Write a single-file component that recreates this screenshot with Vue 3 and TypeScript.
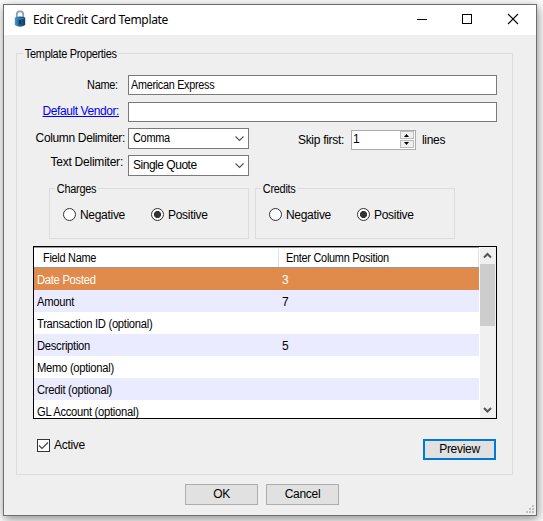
<script setup lang="ts">
import { ref } from 'vue'

interface Field {
  name: string
  position: string
}

interface SignGroup {
  title: string
  value: 'Negative' | 'Positive'
}

const templateName = ref('American Express')
const vendor = ref('')
const skip = ref('1')
const active = ref(true)
const selected = ref(0)
const options = ['Negative', 'Positive'] as const

const signs = ref<SignGroup[]>([
  { title: 'Charges', value: 'Positive' },
  { title: 'Credits', value: 'Positive' },
])

const fields: Field[] = [
  { name: 'Date Posted', position: '3' },
  { name: 'Amount', position: '7' },
  { name: 'Transaction ID (optional)', position: '' },
  { name: 'Description', position: '5' },
  { name: 'Memo (optional)', position: '' },
  { name: 'Credit (optional)', position: '' },
  { name: 'GL Account (optional)', position: '' },
]
</script>

<template>
  <div class="desktop">
    <main class="window">
      <header class="titlebar">
        <svg class="lock" width="12" height="18" viewBox="0 0 12 18">
          <defs>
            <linearGradient id="body" x1="0" x2="1" y1="0" y2="0">
              <stop offset="0" stop-color="#4d9ac9" />
              <stop offset=".4" stop-color="#1e6799" />
              <stop offset="1" stop-color="#133c62" />
            </linearGradient>
          </defs>
          <path d="M2.800 8V4.500C2.800 .3 9.200 .3 9.200 4.500V8" fill="none" stroke="#86a2b5" stroke-width="1.800" />
          <path d="M.8 7.500Q6 5.500 11.200 7.500V15Q6 18.500 .8 15Z" fill="url(#body)" />
          <path d="M1.500 8Q6 10 10.500 8" fill="none" stroke="#5795bb" stroke-width=".8" />
          <path d="M6 10v4" stroke="#0c2f50" stroke-width="1.500" />
        </svg>
        <h1 class="title">Edit Credit Card Template</h1>
        <svg class="controls" width="103" height="12" viewBox="0 0 103 12" fill="none" stroke="#000">
          <path d="M1 6.500h10" />
          <rect x="46.500" y="1.500" width="9" height="9" />
          <path d="M92 1l10 10M102 1l-10 10" stroke-width="1.100" />
        </svg>
      </header>

      <section class="group properties">
        <span class="legend main-legend">Template Properties</span>

        <div class="row">
          <label class="label name-label"><span class="narrow end">Name:</span></label>
          <div class="input"><span class="narrow">{{ templateName }}</span></div>
        </div>
        <div class="row">
          <a class="label link">Default Vendor:</a>
          <div class="input"><span class="narrow">{{ vendor }}</span></div>
        </div>
        <div class="row">
          <label class="label column-label">Column Delimiter:</label>
          <div class="combo">
            <span class="narrow">Comma</span>
            <svg width="9" height="6" viewBox="0 0 9 6"><path d="M.5.5l4 4 4-4" /></svg>
          </div>
          <label class="skip">Skip first:</label>
          <div class="spinner">
            <span class="number">{{ skip }}</span>
            <div class="steps">
              <svg width="14" height="8" viewBox="0 0 14 8"><path d="M4 6h5L6.500 3z" /></svg>
              <svg width="14" height="8" viewBox="0 0 14 8"><path d="M4 2h5L6.500 5z" /></svg>
            </div>
          </div>
          <span class="lines">lines</span>
        </div>
        <div class="row">
          <label class="label text-label">Text Delimiter:</label>
          <div class="combo quote">
            <span>Single Quote</span>
            <svg width="9" height="6" viewBox="0 0 9 6"><path d="M.5.5l4 4 4-4" /></svg>
          </div>
        </div>

        <div class="signs">
          <div v-for="sign in signs" :key="sign.title" class="group sign">
            <span class="legend">{{ sign.title }}</span>
            <div
              v-for="option in options"
              :key="option"
              class="radio"
              @click="sign.value = option"
            >
              <i class="dot" :class="{ on: sign.value === option }"></i>
              <span>{{ option }}</span>
            </div>
          </div>
        </div>

        <div class="table">
          <div class="grid">
            <div class="head">
              <div class="cell first"><span class="narrow">Field Name</span></div>
              <div class="cell"><span class="narrow">Enter Column Position</span></div>
            </div>
            <div
              v-for="(field, index) in fields"
              :key="field.name"
              class="line"
              :class="{ odd: index % 2 === 1, selected: index === selected }"
              @click="selected = index"
            >
              <div class="field"><span class="narrow">{{ field.name }}</span></div>
              <span>{{ field.position }}</span>
            </div>
          </div>
          <div class="scrollbar">
            <svg width="15" height="17" viewBox="0 0 15 17"><path d="M4 10.500l3.500-3.500 3.500 3.500" /></svg>
            <div class="thumb"></div>
            <svg class="down" width="15" height="17" viewBox="0 0 15 17"><path d="M4 7l3.500 3.500L11 7" /></svg>
          </div>
        </div>

        <div class="footer">
          <div class="check" @click="active = !active">
            <svg width="13" height="13" viewBox="0 0 13 13">
              <rect x=".5" y=".5" width="12" height="12" fill="#fff" stroke="#333" />
              <path v-if="active" d="M2 6.500l3 3 6-6" fill="none" stroke="#444" stroke-width="1.200" />
            </svg>
            <span>Active</span>
          </div>
          <button class="button preview">Preview</button>
        </div>
      </section>

      <div class="actions">
        <button class="button">OK</button>
        <button class="button">Cancel</button>
      </div>
      <svg class="grip" width="8" height="8" viewBox="0 0 8 8" fill="#bfbfbf">
        <path d="M6 0h2v2H6zM3 3h2v2H3zM6 3h2v2H6zM0 6h2v2H0zM3 6h2v2H3zM6 6h2v2H6z" />
      </svg>
    </main>
  </div>
</template>

<style>
body {
  background: #f8f8f8;
}
</style>

<style scoped>
* {
  box-sizing: border-box;
}
.desktop {
  width: 543px;
  height: 521px;
  padding: 4px 6px 5px 3px;
  overflow: hidden;
  background: #fcfcfc;
  font: 12px/14px "Liberation Sans", Arial, sans-serif;
  letter-spacing: -0.3px;
  color: #000;
  white-space: nowrap;
}
.narrow {
  display: inline-block;
  transform: scaleX(0.91);
  transform-origin: left;
}
.narrow.end {
  transform-origin: right;
}
.window {
  position: relative;
  height: 512px;
  border: 1px solid #6e6e6e;
  background: #efefef;
  box-shadow: 1px 3px 10px rgba(0, 0, 0, 0.45);
}
.titlebar {
  display: flex;
  height: 30px;
  background: #fff;
}
.lock {
  margin: 5px 0 0 10px;
}
.title {
  margin: 7px 0 0 7px;
  font: 12px/16px "Noto Sans", sans-serif;
  letter-spacing: -0.33px;
}
.controls {
  margin: 8px 17px 0 auto;
}
.group {
  position: relative;
  border: 1px solid #dcdcdc;
}
.legend {
  position: absolute;
  top: -7px;
  left: 5px;
  padding: 0 2px;
  background: #efefef;
  transform: scaleX(0.91);
  transform-origin: left;
}
.main-legend {
  left: 6px;
}
.properties {
  width: 497px;
  height: 422px;
  margin: 18px 0 0 12px;
  padding-top: 21px;
}
.row {
  display: flex;
  height: 20px;
  margin-bottom: 7px;
}
.row:nth-of-type(n + 2) {
  margin-bottom: 6px;
}
.row:nth-of-type(n + 3) {
  height: 21px;
}
.label {
  width: 111px;
  padding: 3px 10px 0 0;
  text-align: right;
}
.link {
  padding: 2px 9px 0 0;
  color: #00f;
  text-decoration: underline;
  letter-spacing: -0.42px;
}
.column-label {
  padding: 3px 3px 0 0;
  letter-spacing: -0.35px;
}
.text-label {
  padding: 0 5px 0 0;
  letter-spacing: -0.23px;
}
.input {
  width: 369px;
  padding: 2px;
  border: 1px solid #7a7a7a;
  background: #fff;
}
.input .narrow {
  transform: scaleX(0.9);
}
.combo {
  display: flex;
  justify-content: space-between;
  width: 121px;
  padding: 2px 4px;
  border: 1px solid #7a7a7a;
  background: #fff;
}
.quote {
  letter-spacing: -0.48px;
}
.combo svg {
  margin-top: 5px;
  fill: none;
  stroke: #555;
  stroke-width: 1.1;
}
.skip {
  width: 102px;
  padding: 5px 7px 0 0;
  text-align: right;
}
.spinner {
  display: flex;
  justify-content: space-between;
  height: 20px;
  margin-top: 2px;
  width: 65px;
  border: 1px solid #ababab;
  background: #fff;
}
.number {
  padding: 1px;
}
.steps {
  display: flex;
  flex-direction: column;
  gap: 1px;
  padding-right: 1px;
}
.steps svg {
  outline: 1px solid #bbb;
  outline-offset: -1px;
  background: #f0f0f0;
}
.lines {
  padding: 5px 0 0 6px;
}
.signs {
  display: flex;
  gap: 6px;
  margin: 12px 0 7px 32px;
}
.sign {
  display: flex;
  width: 200px;
  height: 51px;
  padding: 19px 0 0 13px;
}
.radio {
  display: flex;
  gap: 4px;
  width: 88px;
}
.dot {
  width: 13px;
  height: 13px;
  border: 1px solid #333;
  border-radius: 50%;
  background: #fff;
}
.dot.on {
  background: radial-gradient(circle, #333 3.2px, #fff 3.9px);
}
.table {
  display: flex;
  width: 464px;
  height: 173px;
  margin-left: 16px;
  border: 1px solid #000;
  overflow: hidden;
  background: #fff;
}
.grid {
  width: 445px;
}
.head {
  display: flex;
  height: 21px;
  padding: 1px 0 0 1px;
  border-top: 1px solid #999;
  border-bottom: 1px solid #999;
}
.cell {
  width: 200px;
  padding: 2px 0 0 7px;
  border-right: 1px solid #e0e0e0;
}
.cell.first {
  width: 244px;
  padding-left: 8px;
}
.line {
  display: flex;
  height: 22px;
  padding: 5px 0 0 3px;
}
.line.odd {
  background: #ebebff;
}
.line.selected {
  background: #e08b4b;
  color: #fff;
}
.field {
  width: 245px;
}
.field .narrow {
  transform: scaleX(0.935);
}
.scrollbar {
  display: flex;
  flex-direction: column;
  width: 16px;
  margin-left: 1px;
  background: #f0f0f0;
}
.scrollbar svg {
  fill: none;
  stroke: #555;
  stroke-width: 2;
}
.thumb {
  width: 15px;
  height: 62px;
  background: #cdcdcd;
}
.down {
  margin-top: auto;
}
.footer {
  display: flex;
  justify-content: space-between;
  margin: 20px 16px 0 20px;
}
.check {
  display: flex;
  gap: 4px;
}
.check span {
  margin-top: -1px;
}
.button {
  width: 73px;
  height: 21px;
  padding: 0 0 2px;
  border: 1px solid #adadad;
  background: #e1e1e1;
  color: #000;
  font: inherit;
  letter-spacing: inherit;
}
.preview {
  border: 2px solid #0078d7;
}
.actions {
  display: flex;
  gap: 8px;
  margin: 9px 0 0 181px;
}
.grip {
  position: absolute;
  right: 2px;
  bottom: 2px;
}
</style>
